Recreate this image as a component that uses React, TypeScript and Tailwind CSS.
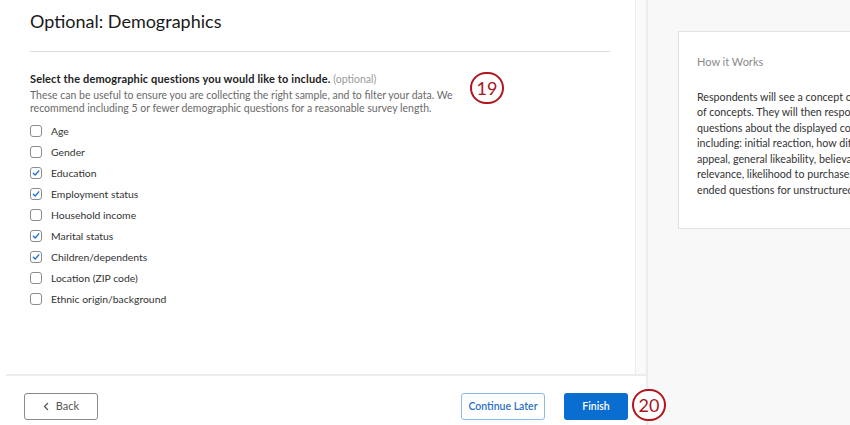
import React from 'react'

const options = [
  { label: 'Age', checked: false },
  { label: 'Gender', checked: false },
  { label: 'Education', checked: true },
  { label: 'Employment status', checked: true },
  { label: 'Household income', checked: false },
  { label: 'Marital status', checked: true },
  { label: 'Children/dependents', checked: true },
  { label: 'Location (ZIP code)', checked: false },
  { label: 'Ethnic origin/background', checked: false },
]

const Checkbox = ({ checked }: { checked: boolean }) => (
  <span className="flex h-[12px] w-[12px] shrink-0 items-center justify-center rounded-[3px] border border-[#8c8c8c] bg-white">
    {checked && (
      <svg width="8" height="8" viewBox="0 0 8 8" fill="none">
        <path d="M1.3 4.2 L3.2 6 L6.8 1.8" stroke="#1a6fd6" strokeWidth="1.3" strokeLinecap="round" strokeLinejoin="round" />
      </svg>
    )}
  </span>
)

const Marker = ({ n, className }: { n: string; className: string }) => (
  <div
    className={`absolute flex h-[32px] w-[34px] items-center justify-center rounded-full border-2 border-[#b3141d] bg-white text-[18px] leading-none text-[#a8161e] ${className}`}
  >
    {n}
  </div>
)

const App = () => {
  return (
    <div className="relative flex h-[425px] w-[850px] overflow-hidden bg-white font-['Lato',sans-serif] text-[#333]">
      {/* Left Section */}
      <div className="flex w-[648px] shrink-0 flex-col border-r-2 border-[#ececec]">
        <div className="flex flex-1">
          <div className="flex-1 px-[30px] pt-[10px]">
            <h1 className="text-[18px] leading-[22px] text-[#1a1a1a]">Optional: Demographics</h1>
            <div className="mt-[19px] mr-[-5px] h-px bg-[#dcdcdc]" />

            <div className="mt-[21px] text-[10.5px] leading-[12.3px]">
              <p>
                <span className="text-[11px] font-bold tracking-[0.15px] text-[#222]">
                  Select the demographic questions you would like to include.
                </span>{' '}
                <span className="text-[#9a9a9a]">(optional)</span>
              </p>
              <p className="mt-[4px] text-[#6a6a6a]">
                These can be useful to ensure you are collecting the right sample, and to filter your data. We
                <br />
                recommend including 5 or fewer demographic questions for a reasonable survey length.
              </p>
            </div>

            <div className="mt-[7px] flex flex-col">
              {options.map((o) => (
                <label key={o.label} className="flex h-[21px] items-center gap-[9px] text-[10.4px] text-[#333]">
                  <Checkbox checked={o.checked} />
                  {o.label}
                </label>
              ))}
            </div>
          </div>
          {/* scrollbar track */}
          <div className="w-[11px] border-l border-[#ececec] bg-[#fafafa]" />
        </div>

        {/* Footer */}
        <div className="ml-[6px] flex h-[51px] items-start border-t-2 border-[#ececec] pt-[17px] pl-[18px] pr-[18px]">
          <button className="flex h-[27px] w-[74px] items-center justify-center gap-[7px] rounded-[3px] border border-[#8a8a8a] text-[11px] text-[#555]">
            <svg width="6" height="9" viewBox="0 0 6 9" fill="none">
              <path d="M5 1 L1.5 4.5 L5 8" stroke="#555" strokeWidth="1.2" />
            </svg>
            Back
          </button>
          <div className="ml-auto flex gap-[19px]">
            <button className="h-[27px] w-[84px] rounded-[3px] border border-[#8fbaea] text-[10.5px] font-semibold text-[#2a72c9]">
              Continue Later
            </button>
            <button className="h-[27px] w-[64px] rounded-[3px] bg-[#0a6ed1] text-[10.5px] font-semibold text-white">
              Finish
            </button>
          </div>
        </div>
      </div>

      {/* Right Section */}
      <div className="flex-1 overflow-hidden bg-[#f8f8f8] pt-[31px] pl-[30px]">
        <div className="h-[198px] w-[260px] border border-[#e2e2e2] bg-white px-[18px] pt-[22px]">
          <h2 className="text-[11px] text-[#8a8a8a]">How it Works</h2>
          <p className="mt-[18px] whitespace-nowrap text-[10.7px] leading-[15.6px] text-[#333]">
            Respondents will see a concept or a set
            <br />
            of concepts. They will then respond to
            <br />
            questions about the displayed concept(s)
            <br />
            including: initial reaction, how different,
            <br />
            appeal, general likeability, believability,
            <br />
            relevance, likelihood to purchase, and open-
            <br />
            ended questions for unstructured feedback.
          </p>
        </div>
      </div>

      <Marker n="19" className="left-[470px] top-[72px]" />
      <Marker n="20" className="left-[632px] top-[389px]" />
    </div>
  )
}

export default App
